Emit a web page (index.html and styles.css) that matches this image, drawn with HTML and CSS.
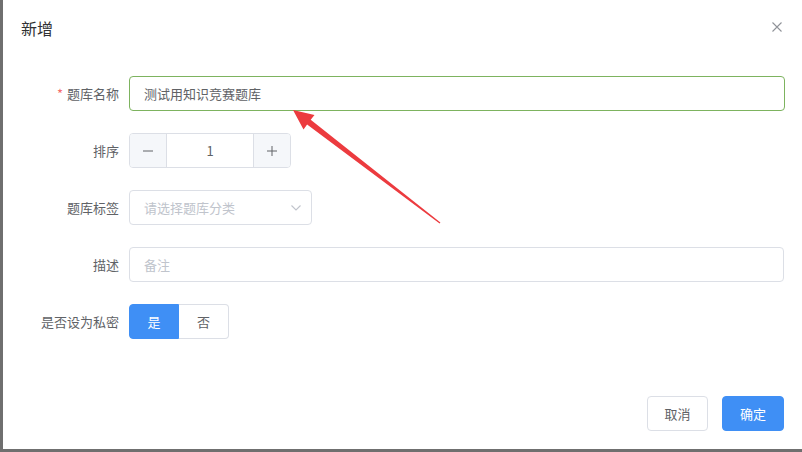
FILE: index.html
```html
<!DOCTYPE html>
<html lang="zh">
<head>
<meta charset="utf-8">
<title>新增</title>
<link rel="stylesheet" href="styles.css">
</head>
<body>
<div class="page">
  <div class="dialog">
    <div class="header">
      <span class="title">新增</span>
      <svg class="close" width="10" height="10" viewBox="0 0 10 10"><path d="M0.5 0.5L9.5 9.5M9.5 0.5L0.5 9.5" stroke="#909399" stroke-width="1.1" fill="none"/></svg>
    </div>
    <div class="form">
      <div class="row">
        <label class="label"><span class="req">*</span>题库名称</label>
        <div class="control">
          <div class="input focus">测试用知识竞赛题库</div>
        </div>
      </div>
      <div class="row">
        <label class="label">排序</label>
        <div class="control">
          <div class="counter">
            <span class="step"><svg width="12" height="12" viewBox="0 0 12 12"><path d="M1 6H11" stroke="#606266" stroke-width="1"/></svg></span>
            <span class="num">1</span>
            <span class="step"><svg width="12" height="12" viewBox="0 0 12 12"><path d="M1 6H11M6 1V11" stroke="#606266" stroke-width="1"/></svg></span>
          </div>
        </div>
      </div>
      <div class="row">
        <label class="label">题库标签</label>
        <div class="control">
          <div class="select">
            <span class="ph">请选择题库分类</span>
            <svg width="10" height="6" viewBox="0 0 10 6"><path d="M0.5 0.5L5 5L9.5 0.5" stroke="#c0c4cc" stroke-width="1.1" fill="none"/></svg>
          </div>
        </div>
      </div>
      <div class="row">
        <label class="label">描述</label>
        <div class="control">
          <div class="input desc"><span class="ph">备注</span></div>
        </div>
      </div>
      <div class="row">
        <label class="label">是否设为私密</label>
        <div class="control">
          <div class="radio-group">
            <span class="rbtn active">是</span>
            <span class="rbtn">否</span>
          </div>
        </div>
      </div>
    </div>
    <div class="footer">
      <button class="btn cancel">取消</button>
      <button class="btn primary">确定</button>
    </div>
  </div>
  <svg class="arrow" width="802" height="452" viewBox="0 0 802 452">
    <polygon points="293,110 314.5,115 310.7,119.8 440.4,222.4 439.6,223.6 307.1,124.6 303.5,129.5" fill="#ec3b3f"/>
  </svg>
</div>
</body>
</html>
```
FILE: styles.css
```css
html, body {
  margin: 0;
  padding: 0;
}
body {
  background: #6f6f6f;
  font-family: "Noto Sans CJK SC", "Noto Sans", sans-serif;
  color: #606266;
}
.page {
  position: relative;
  width: 802px;
  height: 452px;
  padding: 0 0 3px 3px;
  box-sizing: border-box;
  display: flex;
}
.dialog {
  flex: 1;
  background: #fff;
  display: flex;
  flex-direction: column;
}
.header {
  height: 55px;
  display: flex;
  align-items: center;
  justify-content: space-between;
  padding: 0 20px 0 18px;
}
.title {
  font-size: 16px;
  color: #303133;
  line-height: 24px;
}
.close {
  display: block;
  margin-top: -2px;
}
.form {
  padding: 21px 17px 0 0;
  display: flex;
  flex-direction: column;
  gap: 22px;
}
.row {
  display: flex;
  align-items: center;
  height: 35px;
}
.label {
  width: 126px;
  box-sizing: border-box;
  padding-right: 10px;
  text-align: right;
  font-size: 13px;
  color: #606266;
  flex-shrink: 0;
}
.req {
  color: #f56c6c;
  margin-right: 4px;
}
.control {
  flex: 1;
  display: flex;
}
.input {
  flex: 1;
  height: 35px;
  box-sizing: border-box;
  border: 1px solid #dcdfe6;
  border-radius: 4px;
  padding: 0 14px;
  display: flex;
  align-items: center;
  font-size: 13px;
  color: #606266;
}
.input.focus {
  border-color: #7db35f;
}
.input.desc {
  margin-right: 1px;
}
.ph {
  color: #c0c4cc;
  font-size: 13px;
}
.counter {
  display: flex;
  width: 162px;
  height: 35px;
  box-sizing: border-box;
  border: 1px solid #dcdfe6;
  border-radius: 4px;
  overflow: hidden;
}
.step {
  width: 36px;
  background: #f5f7fa;
  display: flex;
  align-items: center;
  justify-content: center;
}
.step:first-child {
  border-right: 1px solid #dcdfe6;
}
.step:last-child {
  border-left: 1px solid #dcdfe6;
}
.num {
  flex: 1;
  display: flex;
  align-items: center;
  justify-content: center;
  font-size: 13px;
  color: #606266;
}
.select {
  width: 183px;
  height: 35px;
  box-sizing: border-box;
  border: 1px solid #dcdfe6;
  border-radius: 4px;
  padding: 0 10px 0 14px;
  display: flex;
  align-items: center;
  justify-content: space-between;
}
.radio-group {
  display: flex;
  height: 35px;
}
.rbtn {
  width: 50px;
  box-sizing: border-box;
  display: flex;
  align-items: center;
  justify-content: center;
  font-size: 13px;
  color: #606266;
  border: 1px solid #dcdfe6;
}
.rbtn.active {
  background: #3f8ff5;
  border-color: #3f8ff5;
  color: #fff;
  border-radius: 4px 0 0 4px;
}
.rbtn:last-child {
  border-left: none;
  border-radius: 0 4px 4px 0;
}
.footer {
  margin-top: auto;
  display: flex;
  justify-content: flex-end;
  gap: 14px;
  padding: 0 18px 18px 0;
}
.btn {
  height: 35px;
  width: 62px;
  box-sizing: border-box;
  border: 1px solid #dcdfe6;
  border-radius: 4px;
  background: #fff;
  color: #606266;
  font-family: "Noto Sans CJK SC", "Noto Sans", sans-serif;
  font-size: 13px;
  padding: 0;
}
.btn.cancel {
  width: 61px;
}
.btn.primary {
  background: #3f8ff5;
  border-color: #3f8ff5;
  color: #fff;
}
.arrow {
  position: absolute;
  left: 0;
  top: 0;
  pointer-events: none;
}
```
